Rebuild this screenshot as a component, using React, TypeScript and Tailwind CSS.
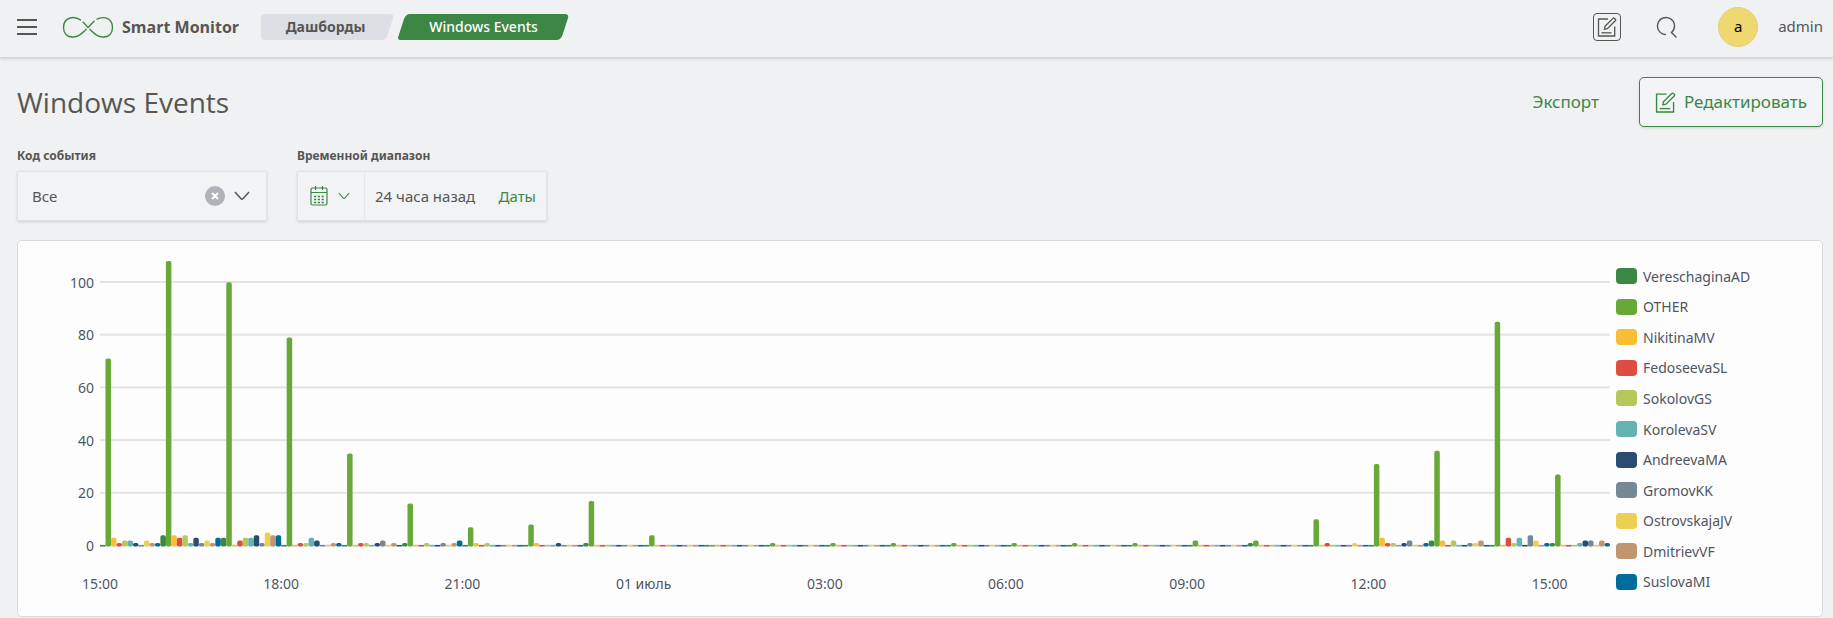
const SERIES = [
  { name: 'VereschaginaAD', color: '#3c8746' },
  { name: 'OTHER', color: '#68a837' },
  { name: 'NikitinaMV', color: '#fabd33' },
  { name: 'FedoseevaSL', color: '#dd4d42' },
  { name: 'SokolovGS', color: '#b5c859' },
  { name: 'KorolevaSV', color: '#63b3b5' },
  { name: 'AndreevaMA', color: '#294d71' },
  { name: 'GromovKK', color: '#748895' },
  { name: 'OstrovskajaJV', color: '#edcf52' },
  { name: 'DmitrievVF', color: '#bf966f' },
  { name: 'SuslovaMI', color: '#006c9c' },
];

const HOURS: number[][] = [
  [0, 71, 3, 1, 2, 2, 1, 0, 2, 1, 1],
  [4, 108, 4, 3, 4, 1, 3, 1, 2, 1, 3],
  [3, 100, 0, 2, 3, 3, 4, 1, 5, 4, 4],
  [0, 79, 0, 1, 1, 3, 2, 0, 0, 1, 1],
  [0, 35, 0, 1, 1, 0, 1, 2, 0, 1, 0],
  [1, 16, 0, 0, 1, 0, 0, 1, 0, 1, 2],
  [0, 7, 1, 0, 1, 0, 0, 0, 0, 0, 0],
  [0, 8, 1, 0, 0, 0, 1, 0, 0, 0, 0],
  [1, 17, 0, 0, 0, 0, 0, 0, 0, 0, 0],
  [0, 4, 0, 0, 0, 0, 0, 0, 0, 0, 0],
  [0, 0, 0, 0, 0, 0, 0, 0, 0, 0, 0],
  [0, 1, 0, 0, 0, 0, 0, 0, 0, 0, 0],
  [0, 1, 0, 0, 0, 0, 0, 0, 0, 0, 0],
  [0, 1, 0, 0, 0, 0, 0, 0, 0, 0, 0],
  [0, 1, 0, 0, 0, 0, 0, 0, 0, 0, 0],
  [0, 1, 0, 0, 0, 0, 0, 0, 0, 0, 0],
  [0, 1, 0, 0, 0, 0, 0, 0, 0, 0, 0],
  [0, 1, 0, 0, 0, 0, 0, 0, 0, 0, 0],
  [0, 2, 0, 0, 0, 0, 0, 0, 0, 0, 0],
  [1, 2, 0, 0, 0, 0, 0, 0, 0, 0, 0],
  [0, 10, 0, 1, 0, 0, 0, 0, 1, 0, 0],
  [0, 31, 3, 1, 1, 0, 1, 2, 0, 0, 1],
  [2, 36, 2, 0, 2, 0, 0, 1, 1, 2, 0],
  [0, 85, 0, 3, 1, 3, 0, 4, 2, 0, 1],
  [1, 27, 0, 0, 0, 1, 2, 2, 0, 2, 1],
];

const TIMES = ['15:00', '18:00', '21:00', '01 июль', '03:00', '06:00', '09:00', '12:00', '15:00'];
const TICKS = [0, 20, 40, 60, 80, 100];
const BASE = 291;
const UNIT = 2.635;

function EditIcon({ className }: { className: string }) {
  return (
    <svg viewBox="0 0 20 20" className={className} fill="none" stroke="currentColor" strokeWidth="1.3" aria-hidden="true">
      <path d="M11 2H1.5v17h16.2V9.5" />
      <path d="M4.5 15.8h10" />
      <path d="M8 9.3 16 1.4q.7-.7 1.5 0l.8.8q.8.8 0 1.6L10.4 11.6 7.500 12.200z" />
    </svg>
  );
}

function Chevron({ className }: { className: string }) {
  return (
    <svg viewBox="0 0 16 10" className={className} fill="none" stroke="currentColor" strokeWidth="1.5" aria-hidden="true">
      <path d="M1 1l5.8 6.500q1.2 1.200 2.4 0L15 1" />
    </svg>
  );
}

function Chart() {
  const slots = HOURS.length * SERIES.length;
  return (
    <svg className="block h-[346px] w-full overflow-visible" role="img" aria-label="Windows Events">
      {TICKS.map((t) => (
        <g key={t}>
          <rect x="0" y={BASE - t * UNIT - 1.5} width="100%" height="2" fill="#e0e3e8" />
          <text x="-6" y={BASE - t * UNIT + 5} textAnchor="end" className="fill-[#50555f] text-[14px]">
            {t}
          </text>
        </g>
      ))}
      {HOURS.map((row, h) =>
        row.map((v, s) => {
          const height = Math.max(v * UNIT + 0.8, 1.5);
          return (
            <rect
              key={`${h}-${s}`}
              x={`${((h * SERIES.length + s) / slots) * 100}%`}
              y={BASE + 0.5 - height}
              width={`${100 / slots}%`}
              height={height}
              rx={v ? 1.8 : 0}
              fill={SERIES[s].color}
            />
          );
        }),
      )}
      {TIMES.map((label, i) => (
        <text key={i} x={`${i * 12}%`} y="334" textAnchor="middle" className="fill-[#50555f] text-[14px]">
          {label}
        </text>
      ))}
    </svg>
  );
}

export default function App() {
  return (
    <div className="min-h-screen bg-[#f0f1f3] font-['Noto_Sans',sans-serif] text-[#565653]">
      <header className="flex h-[58px] items-center border-b border-[#d3d5d8] pr-[10px] pb-1 pl-[17px] shadow-sm">
        <button aria-label="Меню" className="flex w-5 flex-col gap-[5px]">
          <span className="h-[2px] w-full bg-[#565653]" />
          <span className="h-[2px] w-full bg-[#565653]" />
          <span className="h-[2px] w-full bg-[#565653]" />
        </button>
        <a href="#home" className="ml-[25px] flex items-center gap-2 font-['Open_Sans',sans-serif] text-[16px] font-bold">
          <svg viewBox="0 0 52 24" className="h-6 w-[52px]" fill="none" stroke="#3c8746" strokeWidth="1.4" aria-hidden="true">
            <path d="M19 5.200C15 2.600 11 2 8 3 3.500 4.500 1.500 8 1.500 12.500S4 21.500 10 22C16 22.500 20 18.500 24.500 14" />
            <path d="M20.800 6.800 26 12.500 32.500 5.800" />
            <path d="M34.500 4.300C38 2.500 41.500 2.200 44.500 3.200 48.500 4.700 50.500 8 50.500 12.500S48 21.500 42 22C36 22.500 32 18.500 27.500 14" />
          </svg>
          Smart Monitor
        </a>
        <nav className="ml-[22px] flex items-center">
          <a href="#dashboards" className="relative flex h-[26px] w-[133px] items-center justify-center pr-1 text-[14px] font-bold">
            <svg viewBox="0 0 133 26" className="absolute inset-0 size-full" aria-hidden="true">
              <path d="M4 0H129Q133 0 132 4L126.500 21Q125 26 121 26H4Q0 26 0 22V4Q0 0 4 0z" fill="#dcdfe4" />
            </svg>
            <span className="relative">Дашборды</span>
          </a>
          <a href="#events" className="relative ml-1 flex h-[26px] w-[171px] items-center justify-center text-[14px] font-medium text-white">
            <svg viewBox="0 0 171 26" className="absolute inset-0 size-full" aria-hidden="true">
              <path d="M12 0H167Q171 0 170 4L164.500 21Q163 26 158 26H3Q-1 26 .5 22L6 5Q8 0 12 0z" fill="#3c8746" />
            </svg>
            <span className="relative">Windows Events</span>
          </a>
        </nav>
        <div className="ml-auto flex items-center">
          <button aria-label="Редактировать страницу" className="flex size-7 items-center justify-center rounded border border-[#565653]">
            <EditIcon className="size-5" />
          </button>
          <button aria-label="Поиск" className="ml-[35px]">
            <svg viewBox="0 0 22 22" className="size-[22px]" fill="none" stroke="currentColor" strokeWidth="1.4" aria-hidden="true">
              <path d="M10 18.500A8.500 8.500 0 1 1 15.500 16.500L20.500 21.500" />
            </svg>
          </button>
          <span className="ml-10 flex size-10 items-center justify-center rounded-full border border-[#e6d070] bg-[#f0d870] text-[15px] text-black">a</span>
          <span className="ml-5 text-[15px]">admin</span>
        </div>
      </header>

      <main className="pt-[19px] pr-[10px] pl-[17px]">
        <div className="flex h-[50px] items-center">
          <h1 className="font-['Open_Sans',sans-serif] text-[28px]">Windows Events</h1>
          <button className="ml-auto text-[17px] text-[#3c8746]">Экспорт</button>
          <button className="ml-10 flex h-[50px] items-center gap-2 rounded-[5px] border border-[#3c8746] bg-[#f3f4f6] px-[15px] text-[17px] text-[#3c8746] shadow-sm">
            <EditIcon className="size-[21px]" />
            Редактировать
          </button>
        </div>

        <div className="mt-5 flex gap-[30px]">
          <div className="w-[250px]">
            <label htmlFor="code" className="block text-[12px] leading-[18px] font-bold">Код события</label>
            <div className="mt-[6px] flex h-[50px] items-center border border-[#e0e3e5] bg-[#f2f3f5] pr-4 pl-[14px] shadow-sm">
              <input id="code" defaultValue="Все" className="min-w-0 flex-1 bg-transparent text-[15px] outline-none" />
              <button aria-label="Очистить" className="flex size-5 items-center justify-center rounded-full bg-[#adb3b8] text-white">
                <svg viewBox="0 0 8 8" className="size-2" stroke="currentColor" strokeWidth="2" aria-hidden="true">
                  <path d="M1 1l6 6M7 1L1 7" />
                </svg>
              </button>
              <button aria-label="Открыть список" className="ml-[9px]">
                <Chevron className="h-[10px] w-4" />
              </button>
            </div>
          </div>
          <div className="w-[250px]">
            <div className="text-[12px] leading-[18px] font-bold">Временной диапазон</div>
            <div className="mt-[6px] flex h-[50px] items-center border border-[#e0e3e5] bg-[#f2f3f5] text-[15px] shadow-sm">
              <button aria-label="Календарь" className="flex h-full w-[67px] items-center gap-[10px] border-r border-[#e4e6e9] pl-3 text-[#3c8746]">
                <svg viewBox="0 0 18 20" className="h-5 w-[18px]" fill="none" stroke="currentColor" strokeWidth="1.2" aria-hidden="true">
                  <rect x="1" y="2" width="16" height="17" rx="1.500" />
                  <path d="M1 6.500h16M5.500 0v4M12.500 0v4" />
                  <path d="M4 10.500h10M4 13.500h10M4 16.500h10" strokeDasharray="2.200 1.600" strokeWidth="1.600" />
                </svg>
                <Chevron className="h-2 w-3" />
              </button>
              <button className="pl-[10px]">24 часа назад</button>
              <button className="mr-[10px] ml-auto text-[#3c8746]">Даты</button>
            </div>
          </div>
        </div>

        <section className="mt-[19px] flex rounded-[5px] border border-[#d6d9dd] bg-[#fdfdfe] pt-[14px] pr-[72px] pb-[15px] pl-[82px]">
          <div className="min-w-0 flex-1">
            <Chart />
          </div>
          <ul className="ml-[6px] flex w-[134px] flex-col pt-[6px] pb-1 text-[14px] text-[#50555f]">
            {SERIES.map((s) => (
              <li key={s.name} className="flex flex-1 items-center gap-[6px]">
                <span className="h-4 w-[21px] shrink-0 rounded-[4px]" style={{ backgroundColor: s.color }} />
                {s.name}
              </li>
            ))}
          </ul>
        </section>
      </main>
    </div>
  );
}
